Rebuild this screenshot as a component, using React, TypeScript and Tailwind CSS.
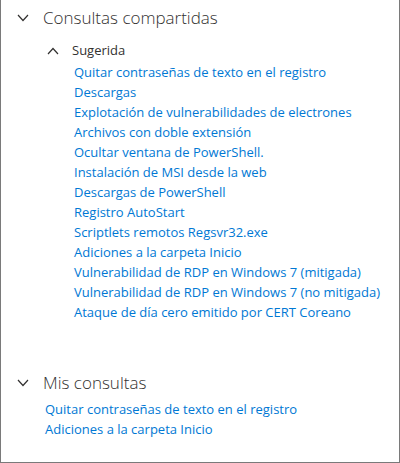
import React from "react";

const suggested = [
  "Quitar contraseñas de texto en el registro",
  "Descargas",
  "Explotación de vulnerabilidades de electrones",
  "Archivos con doble extensión",
  "Ocultar ventana de PowerShell.",
  "Instalación de MSI desde la web",
  "Descargas de PowerShell",
  "Registro AutoStart",
  "Scriptlets remotos Regsvr32.exe",
  "Adiciones a la carpeta Inicio",
  "Vulnerabilidad de RDP en Windows 7 (mitigada)",
  "Vulnerabilidad de RDP en Windows 7 (no mitigada)",
  "Ataque de día cero emitido por CERT Coreano",
];

const mine = [
  "Quitar contraseñas de texto en el registro",
  "Adiciones a la carpeta Inicio",
];

function Chevron({ up = false }: { up?: boolean }) {
  return (
    <svg width="12" height="8" viewBox="0 0 12 8" className="shrink-0">
      <path
        d={up ? "M1 7 L6 1.5 L11 7" : "M1 1 L6 6.5 L11 1"}
        fill="none"
        stroke="#323130"
        strokeWidth="1.2"
      />
    </svg>
  );
}

export default function App() {
  return (
    <div
      className="w-[400px] h-[463px] bg-white border-l border-r border-b border-[#7a7a7a] overflow-hidden"
      style={{ fontFamily: '"Open Sans", "Noto Sans", sans-serif' }}
    >
      <div className="flex items-center gap-[14px] pl-[16px] pt-[7px] h-[29px]">
        <Chevron />
        <span className="text-[17px] font-light text-[#323130] leading-[22px]">Consultas compartidas</span>
      </div>
      <div className="flex items-center gap-[13px] pl-[46px] mt-[12px] h-[20px]">
        <Chevron up />
        <span className="text-[13px] text-[#323130]">Sugerida</span>
      </div>
      <ul className="pl-[73px] mt-[1px]">
        {suggested.map((s) => (
          <li key={s} className="h-[20px] leading-[20px] text-[13px] text-[#0078d4]">
            {s}
          </li>
        ))}
      </ul>
      <div className="flex items-center gap-[14px] pl-[16px] mt-[48px] h-[26px]">
        <Chevron />
        <span className="text-[17px] font-light text-[#323130]">Mis consultas</span>
      </div>
      <ul className="pl-[44px] mt-[3px]">
        {mine.map((s) => (
          <li key={s} className="h-[20px] leading-[20px] text-[13px] text-[#0078d4]">
            {s}
          </li>
        ))}
      </ul>
    </div>
  );
}
